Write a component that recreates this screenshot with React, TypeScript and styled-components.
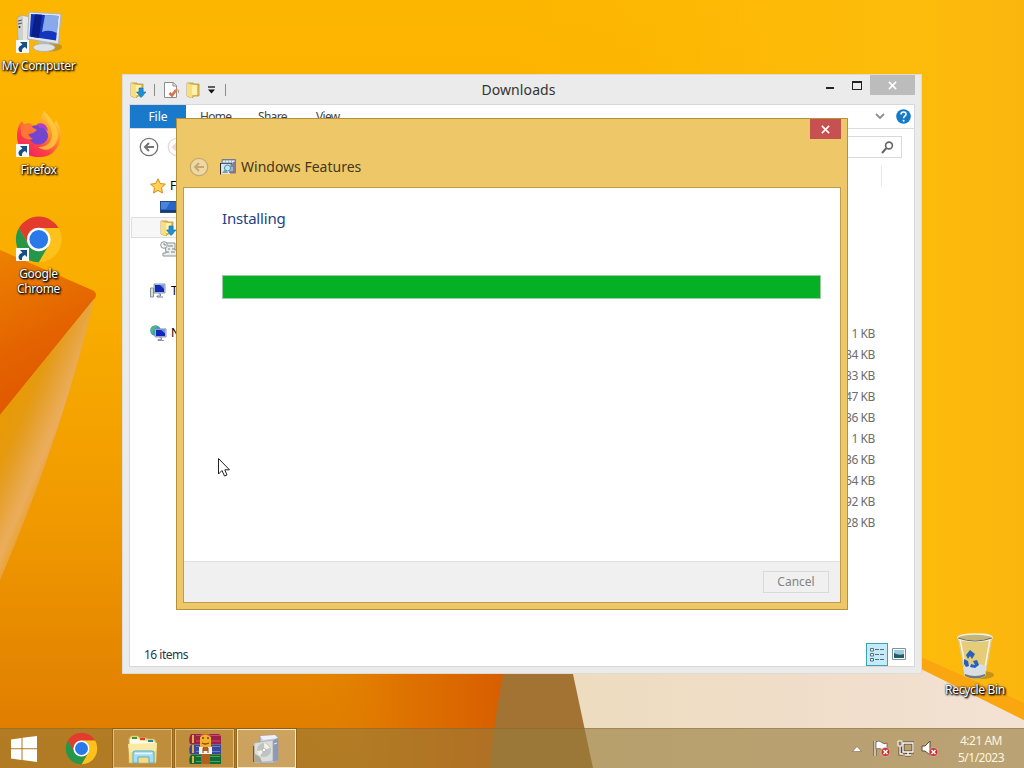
import React from "react";
import styled, { createGlobalStyle } from "styled-components";

const GlobalStyle = createGlobalStyle`
  * { box-sizing: border-box; }
  body { margin: 0; overflow: hidden; font-family: "Noto Sans", "Open Sans", sans-serif; font-size: 12px; }
  svg { display: block; flex: none; }
`;

const Desktop = styled.div`
  position: relative;
  display: flex;
  flex-direction: column;
  justify-content: space-between;
  width: 1024px;
  height: 768px;
  overflow: hidden;
  isolation: isolate;
`;

const Backdrop = styled.svg`
  position: absolute;
  inset: 0;
  z-index: -1;
`;

/* ---------- desktop shortcuts ---------- */

const ShortcutColumn = styled.div`
  display: flex;
  flex-direction: column;
  width: 77px;
`;

const ShortcutCell = styled.div`
  display: flex;
  flex-direction: column;
  align-items: center;
  height: 104px;
  padding-top: 7px;
`;

const ShortcutLabel = styled.span`
  margin-top: 3px;
  color: #fff;
  font-size: 12px;
  line-height: 15px;
  letter-spacing: -0.3px;
  text-align: center;
  white-space: pre;
  text-shadow: 0 0 2px #000, 1px 1px 2px #000, 1px 1px 2px #000;
`;

const BinPlace = styled.div`
  position: absolute;
  left: 937px;
  top: 624px;
  width: 76px;
`;

/* ---------- shared window pieces ---------- */

const ExplorerFrame = styled.section`
  position: absolute;
  left: 122px;
  top: 74px;
  display: flex;
  flex-direction: column;
  width: 800px;
  height: 600px;
  padding: 0 6px 6px;
  background: #ebebeb;
  border: 1px solid #dedbd4;
`;

const TitleBar = styled.header`
  display: grid;
  grid-template-columns: 1fr auto 1fr;
  align-items: start;
  height: 29px;
  flex: none;
`;

const QuickAccess = styled.div`
  display: flex;
  align-items: center;
  height: 30px;
  gap: 5px;
  padding-left: 1px;

  svg:nth-of-type(3) { margin-left: 2px; }
`;

const Separator = styled.i<{ $gap?: number }>`
  width: 1px;
  height: 12px;
  margin: 0 ${(p) => p.$gap ?? 3}px;
  background: #8b8b8b;
`;

const WindowTitle = styled.h1`
  margin: 0;
  padding-right: 7px;
  color: #333;
  font-size: 14px;
  font-weight: 400;
  line-height: 30px;
  letter-spacing: 0.1px;
`;

const Controls = styled.div`
  display: flex;
  justify-content: flex-end;
`;

const CloseBox = styled.button<{ $tone: "grey" | "red" }>`
  display: flex;
  align-items: center;
  justify-content: center;
  width: ${(p) => (p.$tone === "red" ? 31 : 45)}px;
  height: 20px;
  padding: 0;
  border: 0;
  background: ${(p) => (p.$tone === "red" ? "#c75050" : "#bcbcbc")};
`;

const Client = styled.div`
  display: flex;
  flex-direction: column;
  flex: 1;
  background: #fff;
  border: 1px solid #d8d8d8;
`;

const RibbonTabs = styled.nav`
  display: flex;
  align-items: center;
  height: 24px;
  flex: none;
  border-bottom: 1px solid #dcdcdc;
  color: #444;
`;

const FileTab = styled.span`
  width: 56px;
  height: 23px;
  background: #1979ca;
  color: #fff;
  line-height: 24px;
  text-align: center;
`;

const Tab = styled.span<{ $width: number }>`
  width: ${(p) => p.$width}px;
  padding-left: 14px;
  line-height: 23px;
  letter-spacing: -0.7px;
`;

const RibbonEnd = styled.div`
  display: flex;
  align-items: center;
  gap: 11px;
  margin-left: auto;
  padding-right: 3px;
`;

const AddressRow = styled.div`
  display: flex;
  align-items: center;
  gap: 8px;
  height: 36px;
  flex: none;
  padding: 0 12px 0 9px;
`;

const SearchBox = styled.div`
  display: flex;
  align-items: center;
  justify-content: flex-end;
  width: 180px;
  height: 22px;
  margin-left: auto;
  padding-right: 7px;
  border: 1px solid #d9d9d9;
`;

const Body = styled.div`
  display: flex;
  flex: 1;
  min-height: 0;
`;

const Sidebar = styled.aside`
  display: flex;
  flex-direction: column;
  width: 180px;
  padding-top: 10px;
`;

const SideItem = styled.div<{ $indent?: boolean; $active?: boolean; $above?: number }>`
  display: flex;
  align-items: center;
  gap: 4px;
  height: 21px;
  margin: ${(p) => p.$above ?? 0}px 0 0 1px;
  padding-left: ${(p) => (p.$indent ? 28 : 18)}px;
  background: ${(p) => (p.$active ? "#f7f7f7" : "transparent")};
  border: 1px solid ${(p) => (p.$active ? "#dedede" : "transparent")};
  color: #000;
`;

const FileArea = styled.div`
  display: flex;
  flex-direction: column;
  align-items: flex-end;
  flex: 1;
  padding-right: 32px;
`;

const ColumnEdge = styled.i`
  width: 1px;
  height: 20px;
  margin: 1px 0 137px;
  background: #e8e8e8;
`;

const SizeCell = styled.span`
  height: 21px;
  padding-right: 7px;
  color: #6d6d6d;
  line-height: 21px;
  letter-spacing: -0.4px;
`;

const StatusBar = styled.footer`
  display: flex;
  align-items: center;
  justify-content: space-between;
  height: 24px;
  flex: none;
  padding: 0 4px 0 14px;
  color: #26374a;
  letter-spacing: -0.5px;
`;

const ViewButtons = styled.div`
  display: flex;
  align-items: center;
`;

const ViewButton = styled.span<{ $on?: boolean }>`
  display: flex;
  align-items: center;
  justify-content: center;
  width: 22px;
  height: 23px;
  background: ${(p) => (p.$on ? "#c4ebf6" : "transparent")};
  border: 1px solid ${(p) => (p.$on ? "#3ba0b9" : "transparent")};
`;

/* ---------- dialog ---------- */

const Dialog = styled.section`
  position: absolute;
  left: 176px;
  top: 118px;
  display: flex;
  flex-direction: column;
  width: 672px;
  height: 492px;
  padding: 0 6px 6px;
  background: #eec868;
  border: 1px solid #b59238;
`;

const DialogHead = styled.header`
  display: flex;
  flex-direction: column;
  height: 68px;
  flex: none;
`;

const DialogTitle = styled.div`
  display: flex;
  align-items: center;
  margin: 17px 0 0 6px;
  color: #46371a;
  font-size: 14px;
  line-height: 22px;

  svg + svg { margin: 0 5px 0 11px; }
`;

const DialogBody = styled.div`
  display: flex;
  flex-direction: column;
  flex: 1;
  background: #fff;
  border: 1px solid #bf9c4c;
`;

const Heading = styled.h2`
  margin: 17px 0 0 38px;
  color: #253f80;
  font-size: 15px;
  font-weight: 400;
  line-height: 26px;
  letter-spacing: -0.2px;
`;

const Progress = styled.div`
  height: 24px;
  margin: 44px 19px 0 38px;
  background: #06b025;
  border: 1px solid #9fcba4;
`;

const DialogFooter = styled.footer`
  display: flex;
  align-items: center;
  justify-content: flex-end;
  height: 41px;
  margin-top: auto;
  padding-right: 11px;
  background: #f0f0f0;
  border-top: 1px solid #dfdfdf;
`;

const CancelButton = styled.button`
  width: 66px;
  height: 22px;
  padding: 0;
  background: #f0f0f0;
  border: 1px solid #d9d9d9;
  color: #838383;
  font: 12px/18px "Noto Sans", sans-serif;
`;

const Pointer = styled.svg`
  position: absolute;
  left: 217px;
  top: 457px;
`;

/* ---------- taskbar ---------- */

const Taskbar = styled.footer`
  display: flex;
  height: 40px;
  padding-left: 10px;
  background: rgba(150, 122, 58, 0.62);
  border-top: 1px solid rgba(120, 88, 40, 0.35);
`;

const Launcher = styled.div<{ $width: number }>`
  display: flex;
  align-items: center;
  width: ${(p) => p.$width}px;
`;

const TaskButton = styled.div<{ $active?: boolean }>`
  display: flex;
  align-items: center;
  justify-content: center;
  width: 59px;
  height: 39px;
  margin-right: 3px;
  background: ${(p) => (p.$active ? "rgba(255,240,210,.34)" : "rgba(255,235,190,.17)")};
  border: 1px solid ${(p) => (p.$active ? "#f7e9ca" : "#e0bd82")};
  box-shadow: 0 0 0 1px rgba(100, 65, 15, 0.35);
`;

const Tray = styled.div`
  display: flex;
  align-items: center;
  gap: 7px;
  margin-left: auto;
  padding-right: 15px;

  > svg:first-child { margin-right: 4px; }
`;

const Clock = styled.time`
  width: 56px;
  margin-left: 8px;
  color: #fff5df;
  font-size: 12px;
  line-height: 17px;
  letter-spacing: -0.5px;
  text-align: center;
  white-space: nowrap;
`;

/* ---------- drawings ---------- */

const Wallpaper = () => (
  <Backdrop width="1024" height="768" viewBox="0 0 1024 768">
    <defs>
      <linearGradient id="sky" x1="0" y1="0" x2="0" y2="1">
        <stop offset="0" stopColor="#fdb600" />
        <stop offset=".4" stopColor="#f9ad00" />
        <stop offset=".68" stopColor="#f09900" />
        <stop offset=".9" stopColor="#e38300" />
        <stop offset="1" stopColor="#dc7900" />
      </linearGradient>
      <linearGradient id="glow" x1="0" x2="1">
        <stop offset=".5" stopColor="#fdbb06" stopOpacity="0" />
        <stop offset=".88" stopColor="#fdbc0b" />
        <stop offset="1" stopColor="#fbb60e" />
      </linearGradient>
      <linearGradient id="ember" x1="0" y1="0" x2=".3" y2="1">
        <stop offset="0" stopColor="#ec8200" />
        <stop offset=".6" stopColor="#e46300" />
        <stop offset="1" stopColor="#df5600" />
      </linearGradient>
      <linearGradient id="fold" gradientUnits="userSpaceOnUse" x1="0" y1="415" x2="62" y2="440">
        <stop offset="0" stopColor="#e89a05" />
        <stop offset=".55" stopColor="#e39a18" />
        <stop offset="1" stopColor="#e8a137" />
      </linearGradient>
      <linearGradient id="sheen" gradientUnits="userSpaceOnUse" x1="12" y1="440" x2="52" y2="457">
        <stop offset="0" stopColor="#eaad5a" stopOpacity="0" />
        <stop offset=".8" stopColor="#ecb066" stopOpacity=".85" />
        <stop offset="1" stopColor="#eaa63c" stopOpacity=".7" />
      </linearGradient>
      <linearGradient id="rust" x1="0" x2="1">
        <stop offset="0" stopColor="#e28300" stopOpacity="0" />
        <stop offset=".5" stopColor="#de7200" />
        <stop offset="1" stopColor="#d75d00" />
      </linearGradient>
      <linearGradient id="sand" x1="0" x2="1">
        <stop offset="0" stopColor="#eedcbf" />
        <stop offset=".5" stopColor="#f0ddc9" />
        <stop offset="1" stopColor="#f3e2d4" />
      </linearGradient>
    </defs>
    <rect width="1024" height="768" fill="url(#sky)" />
    <rect width="1024" height="768" fill="url(#glow)" />
    <path d="M0 250L92 290Q98 293 95 298L0 415Z" fill="url(#ember)" />
    <path d="M94 299L0 415V580Q62 435 94 299Z" fill="url(#fold)" />
    <path d="M94 299L0 415V580Q62 435 94 299Z" fill="url(#sheen)" />
    <path d="M300 660H510Q500 700 490 768H300Z" fill="url(#rust)" />
    <path d="M506 660H600V768H490Q495 710 506 660Z" fill="#a37333" />
    <path d="M570 660H905L1024 720V768H593Z" fill="url(#sand)" />
    <path d="M890 645L921 657L1024 703V720L921 669Z" fill="#f9a611" />
  </Backdrop>
);

const ChromeRing = () => (
  <>
    <path fill="#e33b2e" d="M24 13H43.05A22 22 0 0 0 4.95 13L14.47 29.5A11 11 0 0 1 24 13Z" />
    <path fill="#fcc21b" d="M33.53 29.5L24 46A22 22 0 0 0 43.05 13H24A11 11 0 0 1 33.53 29.5Z" />
    <path fill="#25964a" d="M14.47 29.5L4.95 13A22 22 0 0 0 24 46L33.53 29.5A11 11 0 0 1 14.47 29.5Z" />
    <circle cx="24" cy="24" r="11.3" fill="#fff" />
    <circle cx="24" cy="24" r="9" fill="#2b78e9" />
  </>
);

const ChromeMark = ({ size }: { size: number }) => (
  <svg width={size} height={size} viewBox="1 1 46 46">
    <ChromeRing />
  </svg>
);

const LinkArrow = () => (
  <g transform="translate(1 33)">
    <rect width="13" height="13" fill="#f6f8fa" />
    <path d="M4 2H11V9L9 7C6 8 6 10 6 12H4C1 9 3 6 6.500 4.500Z" fill="#174e83" />
  </g>
);

const ComputerArt = () => (
  <svg width="48" height="48" viewBox="0 0 48 48">
    <path d="M2 11L7 8L13 10V36L3 33Z" fill="#cfcfcb" stroke="#a3a19a" strokeWidth=".6" />
    <path d="M8 9L13 10V36L8 34Z" fill="#e6e6e4" />
    <path d="M3 14L7 13M3 17L7 16" stroke="#555" />
    <circle cx="4.500" cy="20" r="1" fill="#333" />
    <ellipse cx="34" cy="40" rx="13" ry="4.500" fill="#a07e2c" opacity=".6" />
    <path d="M25 31L34 32L35 40H23Z" fill="#b8bdc2" />
    <ellipse cx="29" cy="40.500" rx="11" ry="4" fill="#e0e3e5" stroke="#b3b3af" />
    <path d="M14 5L46 7L43.500 37L12.500 32Z" fill="#e1e6ea" stroke="#a9b5bf" />
    <path d="M16 7L43.500 9L41 33.500L14.500 29.500Z" fill="#1435bd" />
    <path d="M20 7.300L27 7.800L24 31L16 29.700Z" fill="#0a1e88" />
    <path d="M30 8L43.500 9L41.800 26Q34 22 27 25Z" fill="#a5c8f6" opacity=".8" />
    <LinkArrow />
  </svg>
);

const FirefoxArt = () => (
  <svg width="48" height="48" viewBox="0 0 48 48">
    <defs>
      <linearGradient id="fx" x1=".85" y1="0" x2=".15" y2="1">
        <stop offset="0" stopColor="#ffe14a" />
        <stop offset=".35" stopColor="#ff9a29" />
        <stop offset=".7" stopColor="#ff3c49" />
        <stop offset="1" stopColor="#e51d71" />
      </linearGradient>
    </defs>
    <path d="M29 0C35 6 37 8 39 13C40 11 41 10 41 9C46 17 47 23 45 30C42 41 33 47 23 46C10 46 2 36 2 25C2 18 4 13 7 10L9 14Q14 10 18 14Q22 14 24 12C25 7 27 4 29 0Z" fill="url(#fx)" />
    <path d="M14 17Q25 10 31 19Q36 27 29 32Q21 36 16 30Q12 24 14 17Z" fill="#7446cf" />
    <path d="M22 13Q31 10 33 20Q29 16 24 17Z" fill="#b03fc7" />
    <path d="M6 14Q13 11 17 16L22 19Q18 23 13 23Q15 27 18 28Q9 30 6 23Z" fill="#ff7734" />
    <path d="M29 1C30 9 36 12 37 22C38 31 31 37 23 36C31 42 42 38 43 24C43 15 36 9 29 1Z" fill="#ffcb38" opacity=".8" />
    <LinkArrow />
  </svg>
);

const ChromeShortcut = () => (
  <svg width="48" height="48" viewBox="0 0 48 48">
    <g transform="translate(-1.200 -.5) scale(1.04)">
      <ChromeRing />
    </g>
    <LinkArrow />
  </svg>
);

const BinArt = () => (
  <svg width="48" height="48" viewBox="0 0 48 48">
    <ellipse cx="31" cy="44" rx="12" ry="4" fill="#8d6b24" opacity=".5" />
    <path d="M7 6H41L34 45Q25 50 14 45Z" fill="#e2cf88" opacity=".88" stroke="#d3ccb0" />
    <path d="M9 8L16 44M39 8L33 43" stroke="#f8f2dc" strokeWidth="1.500" />
    <path d="M12 36Q23 30 35 35L33 45Q24 49 14 45Z" fill="#d9dee2" />
    <path d="M14 43Q24 47 34 43V45Q24 50 14 45Z" fill="#75797b" />
    <ellipse cx="24" cy="6.500" rx="17" ry="3.500" fill="#c4b578" stroke="#eee" strokeWidth="1.600" />
    <path d="M7 7Q24 13 41 7" fill="none" stroke="#6d6c61" />
    <path d="M15 24L19 19L24 23L21 28L19 25L17 28ZM13 28L17 30L18 35L15 36L13 33ZM22 30L26 29L28 34L24 37L19 36L20 33L24 34Z" fill="#2860be" />
  </svg>
);

const FolderDown = ({ arrow = false }: { arrow?: boolean }) => (
  <svg width="16" height="16" viewBox="0 0 16 16">
    <path d="M1 1H7L8 2H13V14H8L6 16L1 14Z" fill="#e7bf50" stroke="#ad8a3b" strokeWidth=".7" />
    <path d="M1 1L6 3V16L1 14Z" fill="#f8df80" />
    <path d="M6 3H11V13H6Z" fill="#fff0ae" />
    {arrow && <path d="M9 6H13V10H16L11 15.500L6.500 10H9Z" fill="#1b91d5" stroke="#1269a7" strokeWidth=".6" />}
  </svg>
);

const PageCheck = () => (
  <svg width="16" height="16" viewBox="0 0 16 16">
    <path d="M1.500.5H10L13.500 3.500V15.500H1.500Z" fill="#fff" stroke="#8d8d8d" />
    <path d="M10 .5V4H13.500" fill="none" stroke="#888" />
    <path d="M6.500 11L9 13.500L13 8" fill="none" stroke="#d9714d" strokeWidth="2.600" />
    <path d="M12 8H15.500V11" fill="none" stroke="#e29273" />
  </svg>
);

const BackArrow = ({ tone, fill = "none" }: { tone: string; fill?: string }) => (
  <svg width="20" height="20" viewBox="0 0 20 20" fill="none" stroke={tone}>
    <circle cx="10" cy="10" r="8.700" fill={fill} strokeWidth="1.300" />
    <path d="M15 10H6M10 6L6 10L10 14" strokeWidth="2" />
  </svg>
);

const Star = () => (
  <svg width="16" height="16" viewBox="0 0 16 16">
    <path d="M8 .8L10.200 5.500L15.400 6.200L11.500 9.700L12.500 15L8 12.400L3.500 15L4.500 9.700L.6 6.200L5.800 5.500Z" fill="#ffd456" stroke="#df8419" />
  </svg>
);

const Screen = () => (
  <svg width="18" height="12" viewBox="0 0 18 12">
    <rect x=".5" y=".5" width="17" height="11" fill="#2764c7" stroke="#244d85" />
    <path d="M1 1H10L6 8H1Z" fill="#4586dc" />
    <path d="M1 10H17" stroke="#193b70" strokeWidth="2" />
  </svg>
);

const Recent = () => (
  <svg width="18" height="16" viewBox="0 0 18 16">
    <path d="M5 2H15V9H17V15H3V12H6Z" fill="#eee" stroke="#8c9494" />
    <circle cx="4" cy="4" r="3.300" fill="#f8f8f8" stroke="#8b9696" />
    <path d="M4 2V4H6M8 5H13M8 8H10M12 8H15M6 11H9M11 11H15" stroke="#788484" fill="none" />
  </svg>
);

const SmallPC = ({ globe = false }: { globe?: boolean }) => (
  <svg width="17" height="16" viewBox="0 0 17 16">
    {globe ? (
      <>
        <circle cx="5.500" cy="5.500" r="5.300" fill="#2c9dc8" />
        <path d="M1 4Q4 0 7 1L6 4L3 6L4 9L1 8Z" fill="#54b86f" />
      </>
    ) : (
      <path d="M.5 5H3.500V14H.5Z" fill="#ddd" stroke="#85938c" />
    )}
    <g transform={globe ? "translate(1 3) scale(1 .9)" : undefined}>
      <path d="M4 1H15V10H4Z" fill="#cbd3e1" stroke="#7281a1" strokeWidth=".8" />
      <path d="M5 2H14V9H5Z" fill="#1028b9" />
      <path d="M10 2H14V6Z" fill="#6c91ed" />
      <path d="M8.500 11H10.500V13H7V14H13" stroke="#798399" fill="none" />
    </g>
  </svg>
);

const Cross = () => (
  <svg width="9" height="9" viewBox="0 0 10 10" stroke="#fff" strokeWidth="1.700">
    <path d="M1 1L9 9M9 1L1 9" />
  </svg>
);

const WindowGlyphs = () => (
  <svg width="45" height="20" viewBox="0 0 45 20" fill="none" stroke="#222" strokeWidth="2">
    <path d="M1 13H9M27 7H37" />
    <rect x="27.500" y="6.500" width="9" height="8" strokeWidth="1" />
  </svg>
);

const FeatureIcon = () => (
  <svg width="16" height="16" viewBox="0 0 16 16">
    <path d="M2 .5H15.500V14H2Z" fill="#a4b4c6" stroke="#6e7f94" />
    <path d="M3 2.500H15" stroke="#e7edf3" strokeWidth="1.500" strokeDasharray="2 1" />
    <path d="M.5 4V15.500" stroke="#292929" fill="none" />
    <path d="M1 5H10V15H1Z" fill="#dbe5ee" />
    <path d="M1 4.500H12V8" stroke="#4b5c70" fill="none" />
    <circle cx="7.500" cy="9" r="3" fill="#c8e5f4" stroke="#3f90b8" />
    <path d="M2 14L5 10.500L8 14" fill="#7aa38b" />
    <path d="M14 3V13H9" stroke="#8e6480" fill="none" strokeWidth="1.500" />
  </svg>
);

const ExplorerArt = () => (
  <svg width="32" height="32" viewBox="0 0 32 32">
    <path d="M2 6L4 3H11L13 5H19L21 6H27L29 9V30H2Z" fill="#f1dc8f" stroke="#d3b456" strokeWidth=".7" />
    <path d="M3 6H12L14 8H20L22 9H28V12H3Z" fill="#fffbe6" />
    <path d="M5 4H10V6H5Z" fill="#3f9a3c" />
    <path d="M13 5H18V7H13Z" fill="#df3e28" />
    <path d="M21 7H26V9H21Z" fill="#2c86a0" />
    <path d="M1 11L30 10L29 29H3Z" fill="#f9e9a2" />
    <path d="M3 19L29 18V29H3Z" fill="#f2d777" opacity=".7" />
    <path d="M6 30V20Q6 18 8 18H25Q27 18 27 20V30H22V24H11V30Z" fill="#a7dcf3" stroke="#53acd6" />
    <path d="M8 20.500H25" stroke="#e3f8ff" strokeWidth="1.500" />
  </svg>
);

const ArchiveArt = () => (
  <svg width="34" height="32" viewBox="0 0 34 32">
    <path d="M3 1H31L33 3V11H2Q0 6 3 1Z" fill="#9c2149" />
    <path d="M3 11.500H33V21H2Q0 16 3 11.500Z" fill="#39479c" />
    <path d="M3 21.500H33V31H2Q0 26 3 21.500Z" fill="#126a35" />
    <path d="M8 2.500H32M8 8H32" stroke="#c84b74" />
    <path d="M8 13.500H32M8 18.500H32" stroke="#6b7fd0" />
    <path d="M8 23.500H32M8 28.500H32" stroke="#3fa862" />
    <path d="M5 2V10M5 12V20M5 23V30" stroke="#e2ae3d" strokeWidth="2" />
    <path d="M13 1H22V31H13Z" fill="#b45f22" />
    <path d="M12 4Q17 -1 23 4V14H12Z" fill="#f3b02e" />
    <path d="M14 5H16M19 5H21M14 10Q17 12 21 10" stroke="#7b4710" strokeWidth="1.300" fill="none" />
    <path d="M11 14H15V18H20V14H24V21H11Z" fill="#f7efe4" />
    <path d="M15 15V20M20 15V20" stroke="#7c4a32" />
  </svg>
);

const InstallerArt = () => (
  <svg width="32" height="32" viewBox="0 0 32 32">
    <path d="M9 3L24 2L27 5V27L23 30H10Z" fill="#c9d0e2" stroke="#8c95ac" strokeWidth=".7" />
    <path d="M9 3L24 2L27 5L12 7Z" fill="#eef1f9" />
    <path d="M22 7L27 5V27L22 29Z" fill="#8d99b9" />
    <path d="M3 10L22 7V28L4 30Z" fill="#dcdedb" stroke="#a4a8ad" strokeWidth=".7" />
    <circle cx="13" cy="17" r="7" fill="#bfc3c2" />
    <path d="M13 10Q17 11 19 15L13 17ZM6 18L13 17L9 23Q6 21 6 18Z" fill="#f4f1df" />
    <circle cx="13" cy="17" r="1.800" fill="#fff" stroke="#a0a5a5" strokeWidth=".7" />
    <path d="M4 29V21L9 24L11 29Z" fill="#a9a899" />
    <path d="M2.500 13V29" stroke="#5b574e" />
    <path d="M23 11L26 10" stroke="#e9edf7" />
  </svg>
);

const TrayBadge = () => (
  <g>
    <circle cx="12.500" cy="12" r="4.500" fill="#c83535" stroke="#f2c4b5" strokeWidth=".7" />
    <path d="M10.500 10L14.500 14M14.500 10L10.500 14" stroke="#fff" strokeWidth="1.500" />
  </g>
);

const shortcuts = [
  { label: "My Computer", art: <ComputerArt /> },
  { label: "Firefox", art: <FirefoxArt /> },
  { label: "Google\nChrome", art: <ChromeShortcut /> },
];

const sizes = ["1 KB", "84 KB", "33 KB", "47 KB", "36 KB", "1 KB", "36 KB", "64 KB", "92 KB", "28 KB"];

const Explorer = () => (
  <ExplorerFrame>
    <TitleBar>
      <QuickAccess>
        <FolderDown arrow />
        <Separator />
        <PageCheck />
        <FolderDown />
        <svg width="9" height="8" viewBox="0 0 9 8"><path d="M1 1H8" stroke="#111" strokeWidth="1.300" /><path d="M1 3.500H8L4.500 7.500Z" fill="#111" /></svg>
        <Separator $gap={4} />
      </QuickAccess>
      <WindowTitle>Downloads</WindowTitle>
      <Controls>
        <WindowGlyphs />
        <CloseBox $tone="grey"><Cross /></CloseBox>
      </Controls>
    </TitleBar>
    <Client>
      <RibbonTabs>
        <FileTab>File</FileTab>
        <Tab $width={58}>Home</Tab>
        <Tab $width={58}>Share</Tab>
        <Tab $width={56}>View</Tab>
        <RibbonEnd>
          <svg width="10" height="7" viewBox="0 0 10 7"><path d="M1 1L5 5L9 1" fill="none" stroke="#8d8d8d" strokeWidth="1.800" /></svg>
          <svg width="15" height="15" viewBox="0 0 15 15">
            <circle cx="7.500" cy="7.500" r="7.300" fill="#167ac6" />
            <path d="M5 5.500Q5 3 7.600 3Q10.200 3 10 5.500C10 7 7.600 7 7.600 9.300" fill="none" stroke="#fff" strokeWidth="1.500" />
            <circle cx="7.600" cy="11.800" r="1" fill="#fff" />
          </svg>
        </RibbonEnd>
      </RibbonTabs>
      <AddressRow>
        <BackArrow tone="#747474" />
        <BackArrow tone="#ead6d6" />
        <SearchBox>
          <svg width="13" height="13" viewBox="0 0 13 13" fill="none" stroke="#666"><circle cx="8" cy="4.500" r="3.400" strokeWidth="1.600" /><path d="M5.500 7L1 12" strokeWidth="2" /></svg>
        </SearchBox>
      </AddressRow>
      <Body>
        <Sidebar>
          <SideItem><Star />Favorites</SideItem>
          <SideItem $indent><Screen /></SideItem>
          <SideItem $indent $active><FolderDown arrow /></SideItem>
          <SideItem $indent><Recent /></SideItem>
          <SideItem $above={21}><SmallPC />This PC</SideItem>
          <SideItem $above={21}><SmallPC globe />Network</SideItem>
        </Sidebar>
        <FileArea>
          <ColumnEdge />
          {sizes.map((size, i) => <SizeCell key={i}>{size}</SizeCell>)}
        </FileArea>
      </Body>
      <StatusBar>
        <span>16 items</span>
        <ViewButtons>
          <ViewButton $on>
            <svg width="16" height="15" viewBox="0 0 16 15" fill="none" stroke="#546e83">
              <path d="M1.500 1.500H4.500V4H1.500ZM1.500 6.500H4.500V9H1.500ZM1.500 11.500H4.500V14H1.500Z" fill="#fff" />
              <path d="M6 2.500H10M11 2.500H15M6 7.500H10M11 7.500H15M6 12.500H10M11 12.500H15" />
            </svg>
          </ViewButton>
          <ViewButton>
            <svg width="14" height="12" viewBox="0 0 14 12"><path d="M.5.5H13.500V11.500H.5Z" fill="#fff" stroke="#7794ad" /><path d="M2 2H12V9H2Z" fill="#9bcce2" /><path d="M2 5Q7 8 12 6V10H2Z" fill="#285c65" /></svg>
          </ViewButton>
        </ViewButtons>
      </StatusBar>
    </Client>
  </ExplorerFrame>
);

const FeaturesDialog = () => (
  <Dialog>
    <DialogHead>
      <Controls><CloseBox $tone="red"><Cross /></CloseBox></Controls>
      <DialogTitle>
        <BackArrow tone="#c5a875" fill="#f0d8a2" />
        <FeatureIcon />
        Windows Features
      </DialogTitle>
    </DialogHead>
    <DialogBody>
      <Heading>Installing</Heading>
      <Progress role="progressbar" />
      <DialogFooter><CancelButton>Cancel</CancelButton></DialogFooter>
    </DialogBody>
  </Dialog>
);

export default function App() {
  return (
    <Desktop>
      <GlobalStyle />
      <Wallpaper />
      <ShortcutColumn>
        {shortcuts.map((s) => (
          <ShortcutCell key={s.label}>
            {s.art}
            <ShortcutLabel>{s.label}</ShortcutLabel>
          </ShortcutCell>
        ))}
      </ShortcutColumn>
      <BinPlace>
        <ShortcutCell>
          <BinArt />
          <ShortcutLabel>Recycle Bin</ShortcutLabel>
        </ShortcutCell>
      </BinPlace>
      <Explorer />
      <FeaturesDialog />
      <Taskbar>
        <Launcher $width={55}>
          <svg width="27" height="26" viewBox="0 0 27 26" fill="#fff"><path d="M1 3.500L11.500 2V12.300H1ZM12.500 1.800L27 0V12.300H12.500ZM1 13.300H11.500V24L1 22.500ZM12.500 13.300H27V26L12.500 24Z" /></svg>
        </Launcher>
        <Launcher $width={48}><ChromeMark size={33} /></Launcher>
        <TaskButton><ExplorerArt /></TaskButton>
        <TaskButton><ArchiveArt /></TaskButton>
        <TaskButton $active><InstallerArt /></TaskButton>
        <Tray>
          <svg width="10" height="6" viewBox="0 0 10 6"><path d="M.5 5.500L5 .5L9.500 5.500Z" fill="#fff" stroke="#6e5737" strokeWidth=".5" /></svg>
          <svg width="17" height="17" viewBox="0 0 17 17"><path d="M2 1V16" stroke="#5c4a33" strokeWidth="3" /><path d="M2 1V16" stroke="#fff" strokeWidth="1.300" /><path d="M3 2Q6 0 8 2Q11 5 14 3V10Q11 11 8 9Q6 8 3 9Z" fill="#fff" stroke="#5c4a33" strokeWidth=".7" /><TrayBadge /></svg>
          <svg width="17" height="17" viewBox="0 0 17 17" fill="none"><path d="M6 3H16V12H6ZM11 12V15M8 15H14M3 6V14H6" stroke="#5c4a33" strokeWidth="3" /><path d="M6 3H16V12H6ZM11 12V15M8 15H14M3 6V14H6" stroke="#fff" strokeWidth="1.300" /><path d="M1 1H5V6H1Z" fill="#927957" stroke="#fff" /></svg>
          <svg width="17" height="17" viewBox="0 0 17 17"><path d="M1 6H4L9 1V15L4 11H1Z" fill="#fff" stroke="#5c4a33" /><TrayBadge /></svg>
          <Clock>4:21 AM<br />5/1/2023</Clock>
        </Tray>
      </Taskbar>
      <Pointer width="14" height="21" viewBox="0 0 14 21"><path d="M1.500 1.500V17L5 13.500L7.500 19L10 18L7.800 12.800H12.500Z" fill="#fff" stroke="#222" /></Pointer>
    </Desktop>
  );
}
